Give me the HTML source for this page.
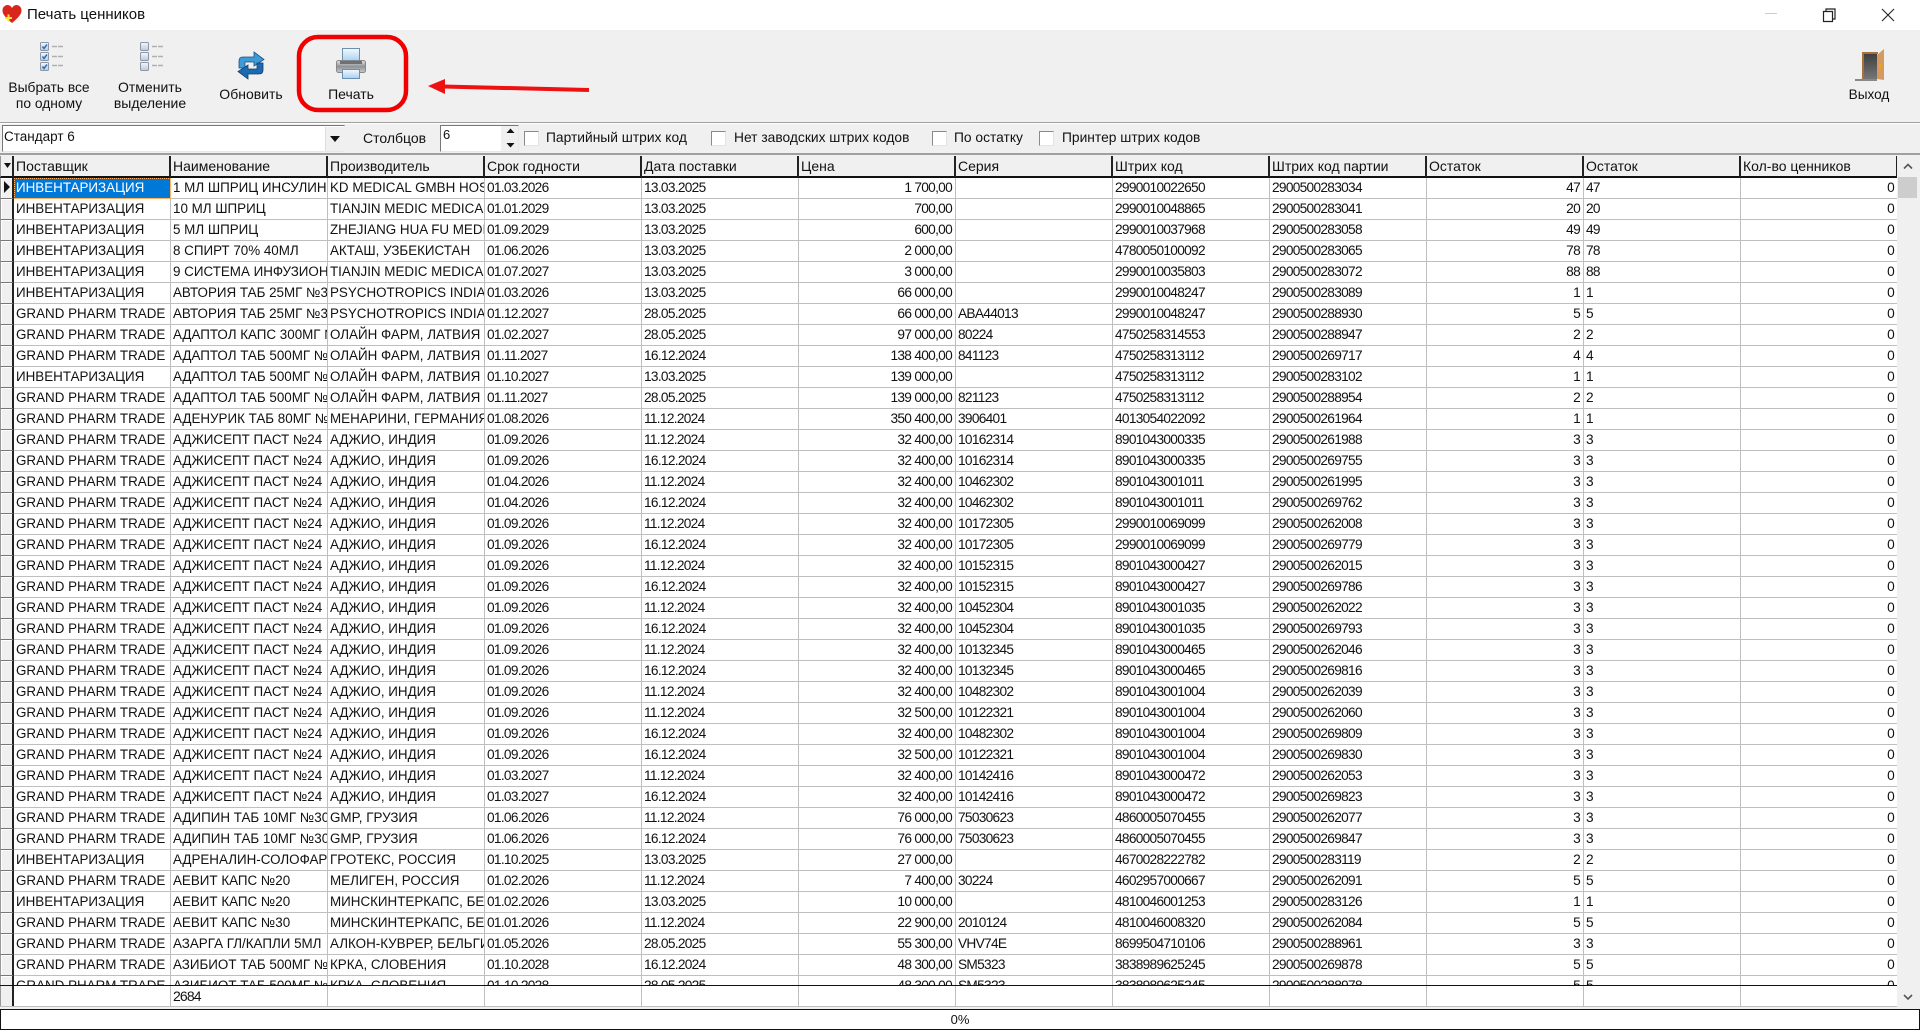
<!DOCTYPE html>
<html lang="ru"><head><meta charset="utf-8"><title>Печать ценников</title>
<style>
html,body{margin:0;padding:0;width:1920px;height:1030px;overflow:hidden;background:#f0f0f0;font-family:"Liberation Sans",Arial,sans-serif;font-size:14px;color:#111}
.a{position:absolute;white-space:nowrap}
svg{position:absolute;overflow:visible}
#tb{left:0;top:0;width:1920px;height:30px;background:#fff}
.c{text-align:center;line-height:16px;transform:translateX(-50%)}
.cb{position:absolute;width:13px;height:13px;top:131px;background:#fff;border:1px solid #8a8a8a;border-right-color:#e3e3e3;border-bottom-color:#e3e3e3}
.s{top:130px;line-height:16px;font-size:13.8px}
#g{position:absolute;left:0;top:156px;width:1897px;height:829px;overflow:hidden;background:#fff}
table{border-collapse:separate;border-spacing:0;table-layout:fixed;width:1898px}
th,td{box-sizing:border-box;white-space:nowrap;overflow:hidden;font-weight:400;text-align:left;padding:0 0 0 2px;line-height:20px}
th{height:20px;background:#f0f0f0;border-right:2px solid #222;border-bottom:2px solid #111;line-height:20px;padding-left:2px}
td{height:21px;background:#fff;border-right:1px solid #bfbfbf;border-bottom:1px solid #bfbfbf;font-size:13.4px}
td:nth-child(1){background:#f0f0f0;border-right:2px solid #222;border-bottom:1px solid #777;border-left:1px solid #999;padding:0;box-shadow:inset 1px 1px #fff}
th:nth-child(1){border-left:1px solid #999;padding:0;position:relative}
td:nth-child(n+5){letter-spacing:-.7px;font-size:13.7px}
td:nth-child(7),td:nth-child(11),td:nth-child(13){text-align:right;padding:0 3px 0 0}
tr.f td:nth-child(2){background:#0078d7;color:#fff;outline:1px dotted #ffb060;outline-offset:-1px}
#ft{position:absolute;left:0;top:985px;width:1897px;height:22px;background:#fff;border-top:1px solid #111;box-sizing:border-box;border-bottom:1px solid #bfbfbf}
#ft i{position:absolute;top:0;bottom:0;width:1px;background:#bfbfbf}
#sb{position:absolute;left:1897px;top:156px;width:23px;height:851px;background:#f0f0f0}
#pr{position:absolute;left:0;top:1009px;width:1920px;height:21px;box-sizing:border-box;border:1px solid #111;background:#fff;text-align:center;line-height:19px;font-size:13px}
</style></head><body>
<div id="tb" class="a"></div>
<svg style="left:2px;top:4px" width="20" height="20" viewBox="0 0 20 20"><path d="M10 19C4 14 .5 10.500 .5 6.500 .5 3 3 1 5.500 1 7.500 1 9 2 10 4 11 2 12.500 1 14.500 1 17 1 19.500 3 19.500 6.500 19.500 10.500 16 14 10 19Z" fill="#d8261c"/><path d="M3 14h7M6.500 10.500v7" stroke="#ffe23a" stroke-width="2"/></svg>
<div class="a" style="left:27px;top:6px;font-size:15px;line-height:18px">Печать ценников</div>
<svg style="left:1760px;top:5px" width="150" height="20"><path d="M5 8.500h12" stroke="#ccc"/><path d="M63.500 6.500h9v10h-9zM66 6.500v-2.500h9v10h-2.500" fill="none" stroke="#222" stroke-width="1.200"/><path d="M122 4l12 12M134 4l-12 12" stroke="#222" stroke-width="1.100"/></svg>
<div class="a" style="left:0;top:30px;width:1920px;height:92px;background:#f0f0f0"></div>
<div class="a" style="left:0;top:122px;width:1920px;height:1px;background:#a0a0a0"></div>
<div class="a" style="left:0;top:123px;width:1920px;height:1px;background:#fff"></div>
<div class="a" style="left:0;top:153px;width:1920px;height:2px;background:#a0a0a0"></div>

<svg style="left:0;top:0" width="200" height="80">
<defs><linearGradient id="b" x1="0" y1="0" x2="0" y2="1"><stop offset="0" stop-color="#f6f8fb"/><stop offset="1" stop-color="#bcc9da"/></linearGradient></defs>
<g stroke="#8c97a8" fill="url(#b)"><rect x="40.500" y="42.500" width="8" height="8" rx="1"/><rect x="40.500" y="52.500" width="8" height="8" rx="1"/><rect x="40.500" y="62.500" width="8" height="8" rx="1"/><rect x="140.500" y="42.500" width="8" height="8" rx="1"/><rect x="140.500" y="52.500" width="8" height="8" rx="1"/><rect x="140.500" y="62.500" width="8" height="8" rx="1"/></g>
<g stroke="#2f6fb5" stroke-width="1.500" fill="none"><path d="M42.500 46.500l1.500 2 3-4M42.500 56.500l1.500 2 3-4M42.500 66.500l1.500 2 3-4"/></g>
<g stroke="#b0b0b0" stroke-width="1.500" stroke-dasharray="5 1"><path d="M52 46.500h11M52 56.500h11M52 65.500h11M152 46.500h11M152 56.500h11M152 65.500h11"/></g>
</svg>
<div class="a c" style="left:49px;top:80px;font-size:13.8px">Выбрать все<br>по одному</div>
<div class="a c" style="left:150px;top:79px">Отменить<br>выделение</div>

<svg style="left:237px;top:51px" width="28" height="29" viewBox="0 0 28 29">
<path d="M2 17V10Q2 6 6 6H17V1L27 8.500 17 15V11H8V17Z" fill="#3f9ad8" stroke="#1c4f86" stroke-width=".8"/>
<path d="M26 12V19Q26 23 22 23H11V28L1 20.500 11 14V18H20V12Z" fill="#1c6ab0" stroke="#123f73" stroke-width=".8"/>
</svg>
<div class="a c" style="left:251px;top:86px">Обновить</div>

<svg style="left:336px;top:48px" width="30" height="32" viewBox="0 0 30 32">
<defs><linearGradient id="p" x1="0" y1="0" x2="0" y2="1"><stop offset="0" stop-color="#e6e6e6"/><stop offset=".5" stop-color="#8e9297"/><stop offset="1" stop-color="#c7c9cc"/></linearGradient><linearGradient id="q" x1="0" y1="0" x2="0" y2="1"><stop offset="0" stop-color="#f2f9ff"/><stop offset="1" stop-color="#a8d0f2"/></linearGradient></defs>
<rect x="6.500" y=".5" width="17" height="13" fill="url(#q)" stroke="#6d8fae"/>
<rect x=".5" y="12.500" width="29" height="12" rx="2" fill="url(#p)" stroke="#888"/>
<rect x="4" y="13" width="22" height="3" fill="#6d7175"/>
<rect x="6.500" y="21.500" width="17" height="9" fill="url(#q)" stroke="#6d8fae"/>
</svg>
<div class="a c" style="left:351px;top:86px">Печать</div>

<svg style="left:1855px;top:49px" width="30" height="32" viewBox="0 0 30 32">
<defs><linearGradient id="d" x1="0" y1="0" x2="0" y2="1"><stop offset="0" stop-color="#3c3c3c"/><stop offset="1" stop-color="#767676"/></linearGradient></defs>
<path d="M7 3.500H22V30H7Z" fill="url(#d)"/><path d="M7 3h16v2H9v25H7Z" fill="#a8703a"/>
<path d="M22 6L29 0V31L22 30Z" fill="#d49a60"/><rect x="24" y="15" width="2" height="5" fill="#eaa520"/>
<path d="M0 31H22" stroke="#666" stroke-width="1.500"/>
</svg>
<div class="a c" style="left:1869px;top:87px;font-size:13.6px">Выход</div>

<svg style="left:0;top:0" width="620" height="120" fill="none">
<rect x="299" y="37" width="107" height="73" rx="19" stroke="#f00000" stroke-width="4.500"/>
<path d="M443 86.500L589 90" stroke="#ee1111" stroke-width="4"/><path d="M428 86L445 79V94Z" fill="#ee1111"/>
</svg>

<div class="a" style="left:2px;top:125px;width:343px;height:27px;box-sizing:border-box;background:#fff;border:1px solid #777;border-right-color:#e8e8e8;border-bottom-color:#e8e8e8;padding:3px 1px;line-height:16px;font-size:13.5px">Стандарт 6</div>
<div class="a" style="left:325px;top:127px;width:19px;height:24px;background:#f0f0f0;border-left:1px solid #ddd"></div>
<svg style="left:330px;top:136px" width="11" height="7"><path d="M0 0H10L5 6Z" fill="#111"/></svg>
<div class="a" style="left:363px;top:130px;line-height:16px">Столбцов</div>
<div class="a" style="left:440px;top:125px;width:79px;height:27px;box-sizing:border-box;background:#fff;border:1px solid #777;border-right-color:#e8e8e8;border-bottom-color:#e8e8e8;padding:1px 2px;line-height:16px;font-size:13px">6</div>
<div class="a" style="left:501px;top:126px;width:17px;height:25px;background:#f0f0f0"></div>
<svg style="left:506px;top:127px" width="9" height="22"><path d="M.5 6L4.500 1.500 8.500 6ZM.5 16L4.500 20.500 8.500 16Z" fill="#111"/></svg>
<div class="cb" style="left:524px"></div><div class="a s" style="left:546px">Партийный штрих код</div>
<div class="cb" style="left:711px"></div><div class="a s" style="left:734px">Нет заводских штрих кодов</div>
<div class="cb" style="left:932px"></div><div class="a s" style="left:954px">По остатку</div>
<div class="cb" style="left:1039px"></div><div class="a s" style="left:1062px">Принтер штрих кодов</div>

<div id="g"><table>
<colgroup><col style="width:14px"><col span="12" style="width:157px"></colgroup>
<tr><th></th><th>Поставщик</th><th>Наименование</th><th>Производитель</th><th>Срок годности</th><th>Дата поставки</th><th>Цена</th><th>Серия</th><th>Штрих код</th><th>Штрих код партии</th><th>Остаток</th><th>Остаток</th><th>Кол-во ценников</th></tr>
<tr class="f"><td></td><td>ИНВЕНТАРИЗАЦИЯ</td><td>1 МЛ ШПРИЦ ИНСУЛИНОВЫЙ</td><td>KD MEDICAL GMBH HOSPITAL</td><td>01.03.2026</td><td>13.03.2025</td><td>1 700,00</td><td></td><td>2990010022650</td><td>2900500283034</td><td>47</td><td>47</td><td>0</td></tr>
<tr><td></td><td>ИНВЕНТАРИЗАЦИЯ</td><td>10 МЛ ШПРИЦ</td><td>TIANJIN MEDIC MEDICAL</td><td>01.01.2029</td><td>13.03.2025</td><td>700,00</td><td></td><td>2990010048865</td><td>2900500283041</td><td>20</td><td>20</td><td>0</td></tr>
<tr><td></td><td>ИНВЕНТАРИЗАЦИЯ</td><td>5 МЛ ШПРИЦ</td><td>ZHEJIANG HUA FU MEDICAL</td><td>01.09.2029</td><td>13.03.2025</td><td>600,00</td><td></td><td>2990010037968</td><td>2900500283058</td><td>49</td><td>49</td><td>0</td></tr>
<tr><td></td><td>ИНВЕНТАРИЗАЦИЯ</td><td>8 СПИРТ 70% 40МЛ</td><td>АКТАШ, УЗБЕКИСТАН</td><td>01.06.2026</td><td>13.03.2025</td><td>2 000,00</td><td></td><td>4780050100092</td><td>2900500283065</td><td>78</td><td>78</td><td>0</td></tr>
<tr><td></td><td>ИНВЕНТАРИЗАЦИЯ</td><td>9 СИСТЕМА ИНФУЗИОННАЯ</td><td>TIANJIN MEDIC MEDICAL</td><td>01.07.2027</td><td>13.03.2025</td><td>3 000,00</td><td></td><td>2990010035803</td><td>2900500283072</td><td>88</td><td>88</td><td>0</td></tr>
<tr><td></td><td>ИНВЕНТАРИЗАЦИЯ</td><td>АВТОРИЯ ТАБ 25МГ №30</td><td>PSYCHOTROPICS INDIA</td><td>01.03.2026</td><td>13.03.2025</td><td>66 000,00</td><td></td><td>2990010048247</td><td>2900500283089</td><td>1</td><td>1</td><td>0</td></tr>
<tr><td></td><td>GRAND PHARM TRADE</td><td>АВТОРИЯ ТАБ 25МГ №30</td><td>PSYCHOTROPICS INDIA</td><td>01.12.2027</td><td>28.05.2025</td><td>66 000,00</td><td>ABA44013</td><td>2990010048247</td><td>2900500288930</td><td>5</td><td>5</td><td>0</td></tr>
<tr><td></td><td>GRAND PHARM TRADE</td><td>АДАПТОЛ КАПС 300МГ №20</td><td>ОЛАЙН ФАРМ, ЛАТВИЯ</td><td>01.02.2027</td><td>28.05.2025</td><td>97 000,00</td><td>80224</td><td>4750258314553</td><td>2900500288947</td><td>2</td><td>2</td><td>0</td></tr>
<tr><td></td><td>GRAND PHARM TRADE</td><td>АДАПТОЛ ТАБ 500МГ №20</td><td>ОЛАЙН ФАРМ, ЛАТВИЯ</td><td>01.11.2027</td><td>16.12.2024</td><td>138 400,00</td><td>841123</td><td>4750258313112</td><td>2900500269717</td><td>4</td><td>4</td><td>0</td></tr>
<tr><td></td><td>ИНВЕНТАРИЗАЦИЯ</td><td>АДАПТОЛ ТАБ 500МГ №20</td><td>ОЛАЙН ФАРМ, ЛАТВИЯ</td><td>01.10.2027</td><td>13.03.2025</td><td>139 000,00</td><td></td><td>4750258313112</td><td>2900500283102</td><td>1</td><td>1</td><td>0</td></tr>
<tr><td></td><td>GRAND PHARM TRADE</td><td>АДАПТОЛ ТАБ 500МГ №20</td><td>ОЛАЙН ФАРМ, ЛАТВИЯ</td><td>01.11.2027</td><td>28.05.2025</td><td>139 000,00</td><td>821123</td><td>4750258313112</td><td>2900500288954</td><td>2</td><td>2</td><td>0</td></tr>
<tr><td></td><td>GRAND PHARM TRADE</td><td>АДЕНУРИК ТАБ 80МГ №28</td><td>МЕНАРИНИ, ГЕРМАНИЯ</td><td>01.08.2026</td><td>11.12.2024</td><td>350 400,00</td><td>3906401</td><td>4013054022092</td><td>2900500261964</td><td>1</td><td>1</td><td>0</td></tr>
<tr><td></td><td>GRAND PHARM TRADE</td><td>АДЖИСЕПТ ПАСТ №24</td><td>АДЖИО, ИНДИЯ</td><td>01.09.2026</td><td>11.12.2024</td><td>32 400,00</td><td>10162314</td><td>8901043000335</td><td>2900500261988</td><td>3</td><td>3</td><td>0</td></tr>
<tr><td></td><td>GRAND PHARM TRADE</td><td>АДЖИСЕПТ ПАСТ №24</td><td>АДЖИО, ИНДИЯ</td><td>01.09.2026</td><td>16.12.2024</td><td>32 400,00</td><td>10162314</td><td>8901043000335</td><td>2900500269755</td><td>3</td><td>3</td><td>0</td></tr>
<tr><td></td><td>GRAND PHARM TRADE</td><td>АДЖИСЕПТ ПАСТ №24</td><td>АДЖИО, ИНДИЯ</td><td>01.04.2026</td><td>11.12.2024</td><td>32 400,00</td><td>10462302</td><td>8901043001011</td><td>2900500261995</td><td>3</td><td>3</td><td>0</td></tr>
<tr><td></td><td>GRAND PHARM TRADE</td><td>АДЖИСЕПТ ПАСТ №24</td><td>АДЖИО, ИНДИЯ</td><td>01.04.2026</td><td>16.12.2024</td><td>32 400,00</td><td>10462302</td><td>8901043001011</td><td>2900500269762</td><td>3</td><td>3</td><td>0</td></tr>
<tr><td></td><td>GRAND PHARM TRADE</td><td>АДЖИСЕПТ ПАСТ №24</td><td>АДЖИО, ИНДИЯ</td><td>01.09.2026</td><td>11.12.2024</td><td>32 400,00</td><td>10172305</td><td>2990010069099</td><td>2900500262008</td><td>3</td><td>3</td><td>0</td></tr>
<tr><td></td><td>GRAND PHARM TRADE</td><td>АДЖИСЕПТ ПАСТ №24</td><td>АДЖИО, ИНДИЯ</td><td>01.09.2026</td><td>16.12.2024</td><td>32 400,00</td><td>10172305</td><td>2990010069099</td><td>2900500269779</td><td>3</td><td>3</td><td>0</td></tr>
<tr><td></td><td>GRAND PHARM TRADE</td><td>АДЖИСЕПТ ПАСТ №24</td><td>АДЖИО, ИНДИЯ</td><td>01.09.2026</td><td>11.12.2024</td><td>32 400,00</td><td>10152315</td><td>8901043000427</td><td>2900500262015</td><td>3</td><td>3</td><td>0</td></tr>
<tr><td></td><td>GRAND PHARM TRADE</td><td>АДЖИСЕПТ ПАСТ №24</td><td>АДЖИО, ИНДИЯ</td><td>01.09.2026</td><td>16.12.2024</td><td>32 400,00</td><td>10152315</td><td>8901043000427</td><td>2900500269786</td><td>3</td><td>3</td><td>0</td></tr>
<tr><td></td><td>GRAND PHARM TRADE</td><td>АДЖИСЕПТ ПАСТ №24</td><td>АДЖИО, ИНДИЯ</td><td>01.09.2026</td><td>11.12.2024</td><td>32 400,00</td><td>10452304</td><td>8901043001035</td><td>2900500262022</td><td>3</td><td>3</td><td>0</td></tr>
<tr><td></td><td>GRAND PHARM TRADE</td><td>АДЖИСЕПТ ПАСТ №24</td><td>АДЖИО, ИНДИЯ</td><td>01.09.2026</td><td>16.12.2024</td><td>32 400,00</td><td>10452304</td><td>8901043001035</td><td>2900500269793</td><td>3</td><td>3</td><td>0</td></tr>
<tr><td></td><td>GRAND PHARM TRADE</td><td>АДЖИСЕПТ ПАСТ №24</td><td>АДЖИО, ИНДИЯ</td><td>01.09.2026</td><td>11.12.2024</td><td>32 400,00</td><td>10132345</td><td>8901043000465</td><td>2900500262046</td><td>3</td><td>3</td><td>0</td></tr>
<tr><td></td><td>GRAND PHARM TRADE</td><td>АДЖИСЕПТ ПАСТ №24</td><td>АДЖИО, ИНДИЯ</td><td>01.09.2026</td><td>16.12.2024</td><td>32 400,00</td><td>10132345</td><td>8901043000465</td><td>2900500269816</td><td>3</td><td>3</td><td>0</td></tr>
<tr><td></td><td>GRAND PHARM TRADE</td><td>АДЖИСЕПТ ПАСТ №24</td><td>АДЖИО, ИНДИЯ</td><td>01.09.2026</td><td>11.12.2024</td><td>32 400,00</td><td>10482302</td><td>8901043001004</td><td>2900500262039</td><td>3</td><td>3</td><td>0</td></tr>
<tr><td></td><td>GRAND PHARM TRADE</td><td>АДЖИСЕПТ ПАСТ №24</td><td>АДЖИО, ИНДИЯ</td><td>01.09.2026</td><td>11.12.2024</td><td>32 500,00</td><td>10122321</td><td>8901043001004</td><td>2900500262060</td><td>3</td><td>3</td><td>0</td></tr>
<tr><td></td><td>GRAND PHARM TRADE</td><td>АДЖИСЕПТ ПАСТ №24</td><td>АДЖИО, ИНДИЯ</td><td>01.09.2026</td><td>16.12.2024</td><td>32 400,00</td><td>10482302</td><td>8901043001004</td><td>2900500269809</td><td>3</td><td>3</td><td>0</td></tr>
<tr><td></td><td>GRAND PHARM TRADE</td><td>АДЖИСЕПТ ПАСТ №24</td><td>АДЖИО, ИНДИЯ</td><td>01.09.2026</td><td>16.12.2024</td><td>32 500,00</td><td>10122321</td><td>8901043001004</td><td>2900500269830</td><td>3</td><td>3</td><td>0</td></tr>
<tr><td></td><td>GRAND PHARM TRADE</td><td>АДЖИСЕПТ ПАСТ №24</td><td>АДЖИО, ИНДИЯ</td><td>01.03.2027</td><td>11.12.2024</td><td>32 400,00</td><td>10142416</td><td>8901043000472</td><td>2900500262053</td><td>3</td><td>3</td><td>0</td></tr>
<tr><td></td><td>GRAND PHARM TRADE</td><td>АДЖИСЕПТ ПАСТ №24</td><td>АДЖИО, ИНДИЯ</td><td>01.03.2027</td><td>16.12.2024</td><td>32 400,00</td><td>10142416</td><td>8901043000472</td><td>2900500269823</td><td>3</td><td>3</td><td>0</td></tr>
<tr><td></td><td>GRAND PHARM TRADE</td><td>АДИПИН ТАБ 10МГ №30</td><td>GMP, ГРУЗИЯ</td><td>01.06.2026</td><td>11.12.2024</td><td>76 000,00</td><td>75030623</td><td>4860005070455</td><td>2900500262077</td><td>3</td><td>3</td><td>0</td></tr>
<tr><td></td><td>GRAND PHARM TRADE</td><td>АДИПИН ТАБ 10МГ №30</td><td>GMP, ГРУЗИЯ</td><td>01.06.2026</td><td>16.12.2024</td><td>76 000,00</td><td>75030623</td><td>4860005070455</td><td>2900500269847</td><td>3</td><td>3</td><td>0</td></tr>
<tr><td></td><td>ИНВЕНТАРИЗАЦИЯ</td><td>АДРЕНАЛИН-СОЛОФАРМ</td><td>ГРОТЕКС, РОССИЯ</td><td>01.10.2025</td><td>13.03.2025</td><td>27 000,00</td><td></td><td>4670028222782</td><td>2900500283119</td><td>2</td><td>2</td><td>0</td></tr>
<tr><td></td><td>GRAND PHARM TRADE</td><td>АЕВИТ КАПС №20</td><td>МЕЛИГЕН, РОССИЯ</td><td>01.02.2026</td><td>11.12.2024</td><td>7 400,00</td><td>30224</td><td>4602957000667</td><td>2900500262091</td><td>5</td><td>5</td><td>0</td></tr>
<tr><td></td><td>ИНВЕНТАРИЗАЦИЯ</td><td>АЕВИТ КАПС №20</td><td>МИНСКИНТЕРКАПС, БЕЛАРУСЬ</td><td>01.02.2026</td><td>13.03.2025</td><td>10 000,00</td><td></td><td>4810046001253</td><td>2900500283126</td><td>1</td><td>1</td><td>0</td></tr>
<tr><td></td><td>GRAND PHARM TRADE</td><td>АЕВИТ КАПС №30</td><td>МИНСКИНТЕРКАПС, БЕЛАРУСЬ</td><td>01.01.2026</td><td>11.12.2024</td><td>22 900,00</td><td>2010124</td><td>4810046008320</td><td>2900500262084</td><td>5</td><td>5</td><td>0</td></tr>
<tr><td></td><td>GRAND PHARM TRADE</td><td>АЗАРГА ГЛ/КАПЛИ 5МЛ</td><td>АЛКОН-КУВРЕР, БЕЛЬГИЯ</td><td>01.05.2026</td><td>28.05.2025</td><td>55 300,00</td><td>VHV74E</td><td>8699504710106</td><td>2900500288961</td><td>3</td><td>3</td><td>0</td></tr>
<tr><td></td><td>GRAND PHARM TRADE</td><td>АЗИБИОТ ТАБ 500МГ №3</td><td>КРКА, СЛОВЕНИЯ</td><td>01.10.2028</td><td>16.12.2024</td><td>48 300,00</td><td>SM5323</td><td>3838989625245</td><td>2900500269878</td><td>5</td><td>5</td><td>0</td></tr>
<tr><td></td><td>GRAND PHARM TRADE</td><td>АЗИБИОТ ТАБ 500МГ №3</td><td>КРКА, СЛОВЕНИЯ</td><td>01.10.2028</td><td>28.05.2025</td><td>48 300,00</td><td>SM5323</td><td>3838989625245</td><td>2900500288978</td><td>5</td><td>5</td><td>0</td></tr>
</table></div>
<svg style="left:4px;top:163px" width="8" height="6"><path d="M0 0H7L3.500 5Z" fill="#111"/></svg>
<svg style="left:4px;top:181px" width="7" height="12"><path d="M0 0L6 6 0 12Z" fill="#111"/></svg>

<div id="ft">
<i style="left:170px"></i><i style="left:327px"></i><i style="left:484px"></i><i style="left:641px"></i><i style="left:798px"></i><i style="left:955px"></i><i style="left:1112px"></i><i style="left:1269px"></i><i style="left:1426px"></i><i style="left:1583px"></i><i style="left:1740px"></i>
<div class="a" style="left:0;top:0;width:14px;height:20px;box-sizing:border-box;background:#f0f0f0;border-left:1px solid #999;border-right:2px solid #222"></div>
<div class="a" style="left:173px;top:2px;line-height:16px;letter-spacing:-.85px">2684</div>
</div>

<div id="sb">
<svg style="left:0;top:0" width="23" height="851"><path d="M7 12.500L11 8.500 15 12.500" fill="none" stroke="#555" stroke-width="1.600"/><rect x="1" y="21" width="19" height="21" fill="#cdcdcd"/><path d="M7 839L11 843 15 839" fill="none" stroke="#555" stroke-width="1.600"/></svg>
</div>
<div id="pr">0%</div>
</body></html>
